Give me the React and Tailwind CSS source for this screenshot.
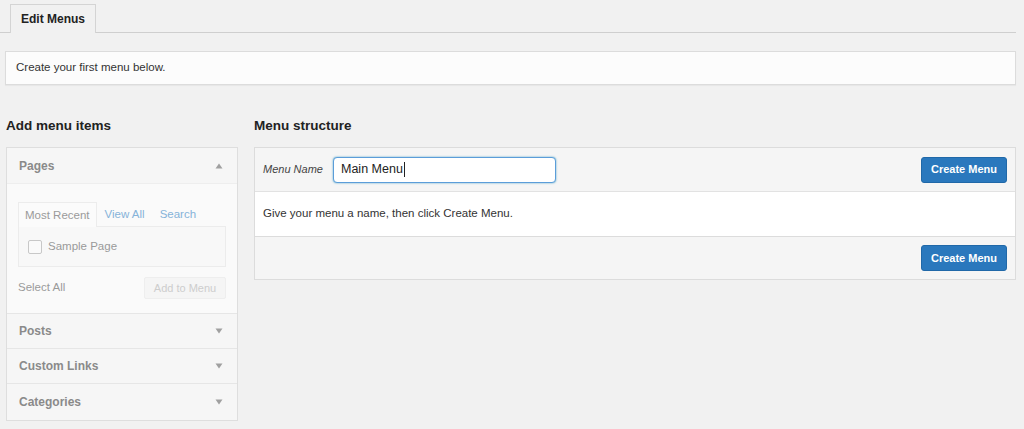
import React from "react";

function Caret({ up }) {
  return (
    <svg width="8" height="6" viewBox="0 0 8 6" className="text-[#a0a0a0]">
      {up ? (
        <path d="M4 0.5 L7.5 5.5 L0.5 5.5 Z" fill="currentColor" />
      ) : (
        <path d="M0.5 0.5 L7.5 0.5 L4 5.5 Z" fill="currentColor" />
      )}
    </svg>
  );
}

function SectionHeader({ label, up, tall }) {
  return (
    <div
      className={
        tall
          ? "flex items-center justify-between h-[37px] pl-[12px] pr-[14px] bg-[#f6f6f6] border-t border-[#e6e6e6]"
          : "flex items-center justify-between h-[35px] pl-[12px] pr-[14px] bg-[#f6f6f6] border-t border-[#e6e6e6]"
      }
    >
      <span className="text-[12px] font-bold text-[#8a8a8a]">{label}</span>
      <Caret up={up} />
    </div>
  );
}

function CreateButton() {
  return (
    <button className="h-[26px] w-[86px] rounded-[3px] bg-[#2a78bd] text-white text-[11px] font-bold border border-[#2068a8]">
      Create Menu
    </button>
  );
}

export default function App() {
  return (
    <div
      className="w-[1024px] h-[429px] bg-[#f1f1f1] overflow-hidden text-[#333]"
      style={{ fontFamily: '"Liberation Sans", Arial, sans-serif' }}
    >
      {/* Tabs */}
      <div className="flex pl-[10px] pt-[4px] mr-[8px] border-b border-[#cfcfcf]">
        <div className="-mb-px h-[29px] px-[10px] flex items-center border border-b-0 border-[#d4d4d4] bg-[#f1f1f1] text-[12px] font-bold text-[#222]">
          Edit Menus
        </div>
      </div>

      {/* Notice */}
      <div className="mt-[18px] ml-[5px] mr-[8px] h-[34px] flex items-center pl-[10px] bg-[#fcfcfc] border border-[#dcdcdc] shadow-[0_1px_1px_rgba(0,0,0,0.04)] text-[11.5px] text-[#333]">
        Create your first menu below.
      </div>

      {/* Columns */}
      <div className="flex gap-[16px] ml-[6px] mr-[8px] mt-[32px]">
        {/* Left */}
        <div className="w-[232px] shrink-0">
          <h2 className="h-[18px] leading-[18px] text-[13.5px] font-bold text-[#222] mb-[12px]">
            Add menu items
          </h2>
          <div className="border border-[#dedede] bg-[#fafafa]">
            <div className="flex items-center justify-between h-[36px] pl-[12px] pr-[14px] bg-[#f6f6f6] border-b border-[#eeeeee]">
              <span className="text-[12px] font-bold text-[#8a8a8a]">Pages</span>
              <Caret up />
            </div>
            <div className="px-[11px] pt-[17px] pb-[14px]">
              <div className="flex items-end text-[11.5px]">
                <div className="h-[25px] px-[6px] pt-[2px] flex items-center border border-b-0 border-[#ececec] bg-[#fbfbfb] text-[#9a9a9a] -mb-px relative z-10">
                  Most Recent
                </div>
                <div className="h-[25px] px-[8px] pt-[2px] flex items-center text-[#86b3d9]">View All</div>
                <div className="h-[25px] px-[7px] pt-[2px] flex items-center text-[#86b3d9]">Search</div>
              </div>
              <div className="h-[41px] border border-[#ececec] bg-[#f8f8f8] flex items-center pl-[9px]">
                <span className="w-[14px] h-[14px] border border-[#c8c8c8] rounded-[2px] bg-[#fafafa]"></span>
                <span className="ml-[6px] text-[11.5px] text-[#9a9a9a]">Sample Page</span>
              </div>
              <div className="flex items-center justify-between mt-[10px]">
                <span className="text-[11.5px] text-[#9a9a9a]">Select All</span>
                <div className="h-[22px] w-[82px] flex items-center justify-center border border-[#eeeeee] bg-[#f5f5f5] rounded-[2px] text-[11px] text-[#cdcdcd]">
                  Add to Menu
                </div>
              </div>
            </div>
            <SectionHeader label="Posts" />
            <SectionHeader label="Custom Links" />
            <SectionHeader label="Categories" tall />
          </div>
        </div>

        {/* Right */}
        <div className="flex-1">
          <h2 className="h-[18px] leading-[18px] text-[13.5px] font-bold text-[#222] mb-[12px]">
            Menu structure
          </h2>
          <div className="border border-[#dcdcdc] bg-white">
            <div className="h-[44px] flex items-center justify-between pl-[8px] pr-[8px] bg-[#f5f5f5] border-b border-[#e2e2e2]">
              <div className="flex items-center">
                <span className="italic text-[11px] text-[#444] w-[70px]">Menu Name</span>
                <div className="w-[223px] h-[26px] border border-[#5b9dd9] rounded-[4px] bg-white shadow-[0_0_2px_rgba(30,140,190,0.8)] flex items-center pl-[7px] text-[12.5px] text-[#222]">
                  Main Menu<span className="inline-block w-px h-[15px] bg-[#222] ml-px"></span>
                </div>
              </div>
              <CreateButton />
            </div>
            <div className="h-[44px] flex items-center pl-[8px] text-[11.5px] text-[#333] bg-white">
              Give your menu a name, then click Create Menu.
            </div>
            <div className="h-[43px] flex items-center justify-end pr-[8px] bg-[#f5f5f5] border-t border-[#dcdcdc]">
              <CreateButton />
            </div>
          </div>
        </div>
      </div>
    </div>
  );
}
